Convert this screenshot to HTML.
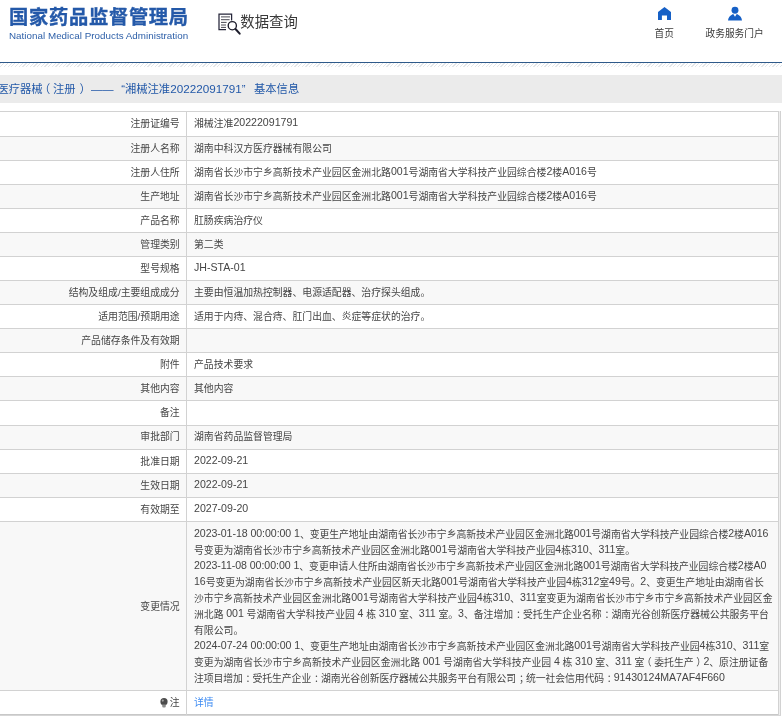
<!DOCTYPE html>
<html lang="zh-CN"><head><meta charset="utf-8"><title>国家药品监督管理局 数据查询</title>
<style>
html,body{margin:0;padding:0;background:#fff;}
body{width:782px;height:720px;overflow:hidden;position:relative;font-family:"Liberation Sans","Noto Sans CJK SC",sans-serif;color:#454545;}
#pg{position:absolute;left:0;top:0;width:782px;height:720px;overflow:hidden;will-change:transform;}
.abs{position:absolute;white-space:nowrap;}
.logo{left:9.0px;top:3.5px;font-size:19.3px;font-weight:bold;color:#2459a9;line-height:28px;letter-spacing:0.7px;-webkit-text-stroke:0.35px #2459a9;transform:scaleY(0.973);transform-origin:left center;}
.sub{left:9px;top:29.5px;font-size:9.8px;color:#2d5fa8;line-height:12px;letter-spacing:0.03px;}
.dq{left:240.3px;top:11.6px;font-size:14.4px;color:#3a3a3a;line-height:20px;}
.nav{font-size:9.7px;color:#3a3a3a;line-height:12px;text-align:center;}
.hline{left:0;top:62px;width:782px;height:1px;background:#2e5a8a;}
.hatch{left:0;top:63px;width:782px;height:4px;background:repeating-linear-gradient(135deg,#e3e6e9 0,#e3e6e9 0.9px,#fff 0.9px,#fff 2.6px);}
.bar{left:0;top:75px;width:782px;height:27.6px;background:#ebebeb;}
.bt{position:absolute;white-space:nowrap;top:80.5px;font-size:11.3px;color:#2258a8;line-height:16px;}
.bg{position:absolute;left:0;width:778px;background:#f8f8f8;}
.hl{position:absolute;left:0;width:781px;height:1px;background:#d2d2d2;}
.vl{position:absolute;width:1px;background:#d2d2d2;}
.lab{position:absolute;right:602.3px;font-size:9.86px;line-height:16px;height:16px;white-space:nowrap;}
.val{position:absolute;left:194px;font-size:9.86px;line-height:16px;height:16px;white-space:nowrap;}
.hn{font-size:11.7px;}
.n{font-size:10.6px;line-height:1px;position:relative;top:-1px;}
.pl{position:relative;left:-2.6px;}
.pr{position:relative;left:2.6px;}
.pc{position:relative;left:2.8px;}
a{color:#3d8bf2;text-decoration:none;}
</style></head><body><div id="pg">

<div class="abs logo">国家药品监督管理局</div>
<div class="abs sub">National Medical Products Administration</div>
<svg class="abs" style="left:216px;top:11px" width="26" height="25" viewBox="216 11 26 25">
<path d="M226 29.6H219V14h12.6v6.4" fill="none" stroke="#26263a" stroke-width="1.25"/>
<path d="M221 16.9h9M221 19.7h8.6M221 22.4h5.6M221 25h5M221 27.4h5" fill="none" stroke="#33333f" stroke-width="0.9"/>
<circle cx="232.3" cy="25.7" r="4.1" fill="#fff" stroke="#1d1d2c" stroke-width="1.35"/>
<path d="M235.5 29L239.7 33.7" stroke="#1d1d2c" stroke-width="2" stroke-linecap="round"/>
</svg>
<div class="abs dq">数据查询</div>
<svg class="abs" style="left:655px;top:5px" width="20" height="17" viewBox="655 5 20 17">
<path d="M664.5 7L658 12.1V19.9H661.9V15.5H667V19.9H671V12.1Z" fill="#1660c6"/>
</svg>
<div class="abs nav" style="left:644.3px;width:40px;top:28.1px">首页</div>
<svg class="abs" style="left:726px;top:5px" width="20" height="17" viewBox="726 5 20 17">
<circle cx="735" cy="10.2" r="3.45" fill="#1660c6"/>
<path d="M728 20.5Q728.4 16.4 732.6 14.3L733.1 13.7L735 16.7L736.9 13.7L737.4 14.3Q741.6 16.4 742 20.5Z" fill="#1660c6"/>
</svg>
<div class="abs nav" style="left:694.6px;width:80px;top:28.1px">政务服务门户</div>
<div class="abs hline"></div><div class="abs hatch"></div>
<div class="abs bar"></div>
<span class="bt" style="left:-2.60px">医疗器械</span>
<span class="bt" style="left:38.90px">（</span>
<span class="bt" style="left:53.00px">注册</span>
<span class="bt" style="left:79.50px">）</span>
<span class="bt" style="left:91.00px">——</span>
<span class="bt" style="left:121.20px">“湘械注准<span class="hn">20222091791</span>”</span>
<span class="bt" style="left:254.00px">基本信息</span>
<div class="bg" style="top:136px;height:24px"></div>
<div class="bg" style="top:184px;height:24px"></div>
<div class="bg" style="top:232px;height:24px"></div>
<div class="bg" style="top:280px;height:24px"></div>
<div class="bg" style="top:328px;height:24px"></div>
<div class="bg" style="top:376px;height:24px"></div>
<div class="bg" style="top:425px;height:24px"></div>
<div class="bg" style="top:473px;height:24px"></div>
<div class="bg" style="top:521px;height:169px"></div>
<div class="hl" style="top:111px"></div>
<div class="hl" style="top:136px;width:779px"></div>
<div class="hl" style="top:160px;width:779px"></div>
<div class="hl" style="top:184px;width:779px"></div>
<div class="hl" style="top:208px;width:779px"></div>
<div class="hl" style="top:232px;width:779px"></div>
<div class="hl" style="top:256px;width:779px"></div>
<div class="hl" style="top:280px;width:779px"></div>
<div class="hl" style="top:304px;width:779px"></div>
<div class="hl" style="top:328px;width:779px"></div>
<div class="hl" style="top:352px;width:779px"></div>
<div class="hl" style="top:376px;width:779px"></div>
<div class="hl" style="top:400px;width:779px"></div>
<div class="hl" style="top:425px;width:779px"></div>
<div class="hl" style="top:449px;width:779px"></div>
<div class="hl" style="top:473px;width:779px"></div>
<div class="hl" style="top:497px;width:779px"></div>
<div class="hl" style="top:521px;width:779px"></div>
<div class="hl" style="top:690px;width:779px"></div>
<div class="hl" style="top:714px;background:#c8c8c8"></div>
<div class="hl" style="top:715px;background:#d6d6d6"></div>
<div class="vl" style="left:779px;top:111px;height:604px;background:#eeeeee"></div>
<div class="vl" style="left:186px;top:111px;height:604px"></div>
<div class="vl" style="left:778px;top:111px;height:604px"></div>
<div class="vl" style="left:780px;top:111px;height:604px"></div>
<div class="lab" style="top:116px">注册证编号</div>
<div class="val" style="top:116px">湘械注准<span class="n">20222091791</span></div>
<div class="lab" style="top:141px">注册人名称</div>
<div class="val" style="top:141px">湖南中科汉方医疗器械有限公司</div>
<div class="lab" style="top:165px">注册人住所</div>
<div class="val" style="top:165px">湖南省长沙市宁乡高新技术产业园区金洲北路<span class="n">001</span>号湖南省大学科技产业园综合楼<span class="n">2</span>楼<span class="n">A016</span>号</div>
<div class="lab" style="top:189px">生产地址</div>
<div class="val" style="top:189px">湖南省长沙市宁乡高新技术产业园区金洲北路<span class="n">001</span>号湖南省大学科技产业园综合楼<span class="n">2</span>楼<span class="n">A016</span>号</div>
<div class="lab" style="top:213px">产品名称</div>
<div class="val" style="top:213px">肛肠疾病治疗仪</div>
<div class="lab" style="top:237px">管理类别</div>
<div class="val" style="top:237px">第二类</div>
<div class="lab" style="top:261px">型号规格</div>
<div class="val" style="top:261px"><span class="n">JH-STA-01</span></div>
<div class="lab" style="top:285px">结构及组成/主要组成成分</div>
<div class="val" style="top:285px">主要由恒温加热控制器、电源适配器、治疗探头组成。</div>
<div class="lab" style="top:309px">适用范围/预期用途</div>
<div class="val" style="top:309px">适用于内痔、混合痔、肛门出血、炎症等症状的治疗。</div>
<div class="lab" style="top:333px">产品储存条件及有效期</div>
<div class="lab" style="top:357px">附件</div>
<div class="val" style="top:357px">产品技术要求</div>
<div class="lab" style="top:381px">其他内容</div>
<div class="val" style="top:381px">其他内容</div>
<div class="lab" style="top:405px">备注</div>
<div class="lab" style="top:429px">审批部门</div>
<div class="val" style="top:429px">湖南省药品监督管理局</div>
<div class="lab" style="top:454px">批准日期</div>
<div class="val" style="top:454px"><span class="n">2022-09-21</span></div>
<div class="lab" style="top:478px">生效日期</div>
<div class="val" style="top:478px"><span class="n">2022-09-21</span></div>
<div class="lab" style="top:502px">有效期至</div>
<div class="val" style="top:502px"><span class="n">2027-09-20</span></div>
<div class="lab" style="top:599px">变更情况</div>
<div class="val" style="top:527px;letter-spacing:-0.062px"><span class="n">2023-01-18 00:00:00 1</span>、变更生产地址由湖南省长沙市宁乡高新技术产业园区金洲北路<span class="n">001</span>号湖南省大学科技产业园综合楼<span class="n">2</span>楼<span class="n">A016</span></div>
<div class="val" style="top:543px;letter-spacing:-0.023px">号变更为湖南省长沙市宁乡高新技术产业园区金洲北路<span class="n">001</span>号湖南省大学科技产业园<span class="n">4</span>栋<span class="n">310</span>、<span class="n">311</span>室。</div>
<div class="val" style="top:559px;letter-spacing:-0.054px"><span class="n">2023-11-08 00:00:00 1</span>、变更申请人住所由湖南省长沙市宁乡高新技术产业园区金洲北路<span class="n">001</span>号湖南省大学科技产业园综合楼<span class="n">2</span>楼<span class="n">A0</span></div>
<div class="val" style="top:575px;letter-spacing:-0.048px"><span class="n">16</span>号变更为湖南省长沙市宁乡高新技术产业园区新天北路<span class="n">001</span>号湖南省大学科技产业园<span class="n">4</span>栋<span class="n">312</span>室<span class="n">49</span>号。<span class="n">2</span>、变更生产地址由湖南省长</div>
<div class="val" style="top:591px;letter-spacing:-0.023px">沙市宁乡高新技术产业园区金洲北路<span class="n">001</span>号湖南省大学科技产业园<span class="n">4</span>栋<span class="n">310</span>、<span class="n">311</span>室变更为湖南省长沙市宁乡市宁乡高新技术产业园区金</div>
<div class="val" style="top:607px;letter-spacing:-0.009px">洲北路 <span class="n">001</span> 号湖南省大学科技产业园 <span class="n">4</span> 栋 <span class="n">310</span> 室、<span class="n">311</span> 室。<span class="n">3</span>、备注增加<span class="pc">：</span>受托生产企业名称<span class="pc">：</span>湖南光谷创新医疗器械公共服务平台</div>
<div class="val" style="top:623px">有限公司。</div>
<div class="val" style="top:639px;letter-spacing:-0.052px"><span class="n">2024-07-24 00:00:00 1</span>、变更生产地址由湖南省长沙市宁乡高新技术产业园区金洲北路<span class="n">001</span>号湖南省大学科技产业园<span class="n">4</span>栋<span class="n">310</span>、<span class="n">311</span>室</div>
<div class="val" style="top:655px;letter-spacing:-0.018px">变更为湖南省长沙市宁乡高新技术产业园区金洲北路 <span class="n">001</span> 号湖南省大学科技产业园 <span class="n">4</span> 栋 <span class="n">310</span> 室、<span class="n">311</span> 室<span class="pl">（</span>委托生产<span class="pr">）</span><span class="n">2</span>、原注册证备</div>
<div class="val" style="top:671px;letter-spacing:-0.084px">注项目增加<span class="pc">：</span>受托生产企业<span class="pc">：</span>湖南光谷创新医疗器械公共服务平台有限公司<span class="pc">；</span>统一社会信用代码<span class="pc">：</span><span class="n">91430124MA7AF4F660</span></div>
<div class="lab" style="top:695px"><svg style="position:absolute;left:-9.4px;top:3.4px" width="8" height="10" viewBox="0 0 8 10"><circle cx="4" cy="3.7" r="3.6" fill="#4c4c4c"/><path d="M2.2 6.6h3.6v1.6q0 1.2-1.2 1.2h-1.2q-1.2 0-1.2-1.2z" fill="#8c8c8c"/><circle cx="2.8" cy="2.6" r="1.05" fill="#a4a4a4"/></svg>注</div>
<div class="val" style="top:695px"><a>详情</a></div>
</div></body></html>
